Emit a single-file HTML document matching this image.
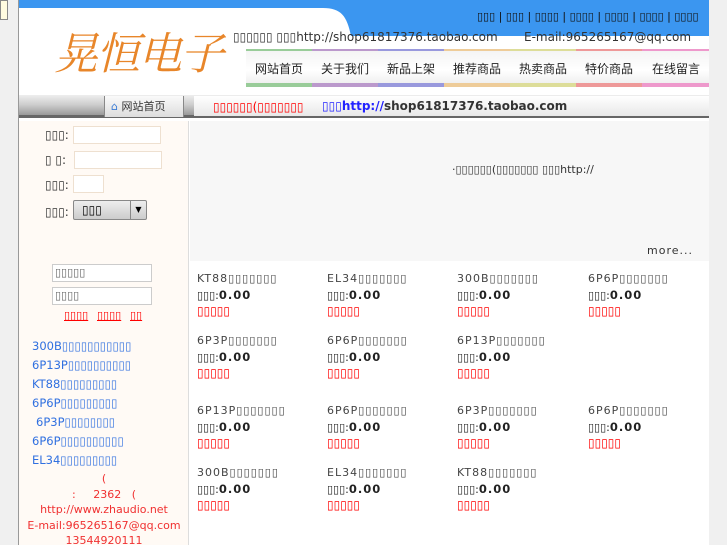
<!DOCTYPE html>
<html><head><meta charset="utf-8"><style>
*{margin:0;padding:0;box-sizing:border-box}
html,body{width:727px;height:545px;overflow:hidden}
body{background:#f0f0f0;font-family:"DejaVu Sans","Liberation Sans","Noto Sans CJK SC",sans-serif;font-size:12px;position:relative}
.a{position:absolute;white-space:nowrap}
#main{position:absolute;left:18px;top:0;width:691px;height:545px;background:#fff;border-left:1px solid #999;overflow:hidden}
.tab{position:absolute;top:49px;height:38px;width:66px;border-top:2px solid;border-bottom:4px solid;font-size:12px;text-align:center;line-height:36px;color:#222;background:linear-gradient(#f4f4f4,#fff 60%,#f0f0f0)}
.g{color:#333;font-size:12px}
.lk{color:#3070e0;font-size:11.5px}
.it{position:absolute;width:120px;white-space:nowrap}.it .n{font-size:11px;color:#444;letter-spacing:1px}.it .pr{font-size:11px;color:#222;margin-top:3px}.it .pr b{font-size:11.5px;letter-spacing:1px}.it .rr{font-size:12px;color:#f00;margin-top:2px}
</style></head><body>
<div class="a" style="left:0;top:0;width:8px;height:20px;background:#fffbe0;border:1px solid #888"></div>
<div id="main">
 <svg class="a" style="left:0;top:0" width="691" height="36"><path d="M0 0 H691 V36 H332 C328 16 322 8 304 8 H0 Z" fill="#3b96f0"/></svg>
 <div class="a" style="left:458px;top:10px;font-size:11px;color:#111">▯▯▯ | ▯▯▯ | ▯▯▯▯ | ▯▯▯▯ | ▯▯▯▯ | ▯▯▯▯ | ▯▯▯▯</div>
 <div class="a" style="left:35px;top:18px;font-size:44px;color:#e8862a;font-family:'Noto Serif CJK SC',serif;font-style:italic;letter-spacing:-2px">晃恒电子</div>
 <div class="a" style="left:214px;top:30px;font-size:12px;color:#333">▯▯▯▯▯▯ ▯▯▯http://shop61817376.taobao.com</div>
 <div class="a" style="left:505px;top:30px;font-size:12px;color:#333">E-mail:965265167@qq.com</div>
 <div class="tab" style="left:227px;border-color:#9c9;">网站首页</div>
 <div class="tab" style="left:293px;border-color:#b9c;">关于我们</div>
 <div class="tab" style="left:359px;border-color:#99d;">新品上架</div>
 <div class="tab" style="left:425px;border-color:#ec9;">推荐商品</div>
 <div class="tab" style="left:491px;border-color:#dd9;">热卖商品</div>
 <div class="tab" style="left:557px;border-color:#e99;">特价商品</div>
 <div class="tab" style="left:623px;width:68px;border-color:#e9c;">在线留言</div>
 <div class="a" style="left:0;top:95px;width:691px;height:23px;background:linear-gradient(#eee,#ccc 50%,#999);border-bottom:3px solid #666"></div>
 <div class="a" style="left:85px;top:96px;width:80px;height:21px;border-left:1px solid #888;border-right:1px solid #888;background:linear-gradient(#fafafa,#ddd);font-size:11px;color:#333;line-height:21px;padding-left:6px"><span style="color:#3a7bd5">⌂</span> 网站首页</div>
 <div class="a" style="left:175px;top:96px;width:516px;height:20px;background:linear-gradient(#fff,#e8e8e8)"></div>
 <div class="a" style="left:194px;top:100px;font-size:12px;color:#f00">▯▯▯▯▯▯(▯▯▯▯▯▯▯</div>
 <div class="a" style="left:303px;top:99px;font-size:12px;font-weight:bold;color:#333"><span style="color:#22f;font-weight:normal">▯▯▯</span><span style="color:#22f">http://</span>shop61817376.taobao.com</div>
 <div class="a" style="left:0;top:121px;width:170px;height:424px;background:#fffaf5;border-right:1px solid #ddd"></div>
 <div class="a" style="left:171px;top:121px;width:520px;height:140px;background:#f7f7f7"></div>
 <div class="a g" style="left:26px;top:128px">▯▯▯:</div><div class="a" style="left:54px;top:126px;width:88px;height:18px;background:#fff;border:1px solid #eee0d0"></div>
 <div class="a g" style="left:26px;top:153px">▯ ▯:</div><div class="a" style="left:55px;top:151px;width:88px;height:18px;background:#fff;border:1px solid #eee0d0"></div>
 <div class="a g" style="left:26px;top:178px">▯▯▯:</div><div class="a" style="left:54px;top:175px;width:31px;height:18px;background:#fff;border:1px solid #eee0d0"></div>
 <div class="a g" style="left:26px;top:205px">▯▯▯:</div><div class="a" style="left:54px;top:200px;width:74px;height:20px;background:linear-gradient(#eee,#ccc);border:1px solid #888;border-radius:2px;font-size:12px;padding:2px 8px">▯▯▯<span style="position:absolute;left:56px;top:0;width:16px;height:18px;border-left:1px solid #888;text-align:center;font-size:8px;line-height:18px">▼</span></div>
 <div class="a" style="left:33px;top:264px;width:100px;height:18px;background:#fff;border:1px solid #ccc;font-size:11px;color:#666;padding:1px 2px">▯▯▯▯▯</div>
 <div class="a" style="left:33px;top:287px;width:100px;height:18px;background:#fff;border:1px solid #ccc;font-size:11px;color:#666;padding:1px 2px">▯▯▯▯</div>
 <div class="a" style="left:45px;top:309px;font-size:11px;color:#f00;text-decoration:underline;font-weight:bold">▯▯▯▯</div>
 <div class="a" style="left:78px;top:309px;font-size:11px;color:#f00;text-decoration:underline;font-weight:bold">▯▯▯▯</div>
 <div class="a" style="left:111px;top:309px;font-size:11px;color:#f00;text-decoration:underline;font-weight:bold">▯▯</div>
 <div class="a lk" style="left:13px;top:339px">300B▯▯▯▯▯▯▯▯▯▯▯</div>
 <div class="a lk" style="left:13px;top:358px">6P13P▯▯▯▯▯▯▯▯▯▯</div>
 <div class="a lk" style="left:13px;top:377px">KT88▯▯▯▯▯▯▯▯▯</div>
 <div class="a lk" style="left:13px;top:396px">6P6P▯▯▯▯▯▯▯▯▯</div>
 <div class="a lk" style="left:17px;top:415px">6P3P▯▯▯▯▯▯▯▯</div>
 <div class="a lk" style="left:13px;top:434px">6P6P▯▯▯▯▯▯▯▯▯▯</div>
 <div class="a lk" style="left:13px;top:453px">EL34▯▯▯▯▯▯▯▯▯</div>
 <div class="a" style="left:0;top:471px;width:170px;text-align:center;color:#f03030;font-size:11px;line-height:15.5px;white-space:normal">(<br>:&nbsp;&nbsp;&nbsp;&nbsp;&nbsp;2362&nbsp;&nbsp;&nbsp;(<br>http://www.zhaudio.net<br>E-mail:965265167@qq.com<br>13544920111</div>
 <div class="a" style="left:433px;top:163px;font-size:11px;color:#333">·▯▯▯▯▯▯(▯▯▯▯▯▯▯ ▯▯▯http://</div>
 <div class="a" style="left:628px;top:244px;font-size:11px;color:#333;letter-spacing:1px">more...</div>
</div>
<div class="it" style="left:197px;top:272px"><div class="n">KT88▯▯▯▯▯▯▯</div><div class="pr">▯▯▯:<b>0.00</b></div><div class="rr">▯▯▯▯▯</div></div>
<div class="it" style="left:327px;top:272px"><div class="n">EL34▯▯▯▯▯▯▯</div><div class="pr">▯▯▯:<b>0.00</b></div><div class="rr">▯▯▯▯▯</div></div>
<div class="it" style="left:457px;top:272px"><div class="n">300B▯▯▯▯▯▯▯</div><div class="pr">▯▯▯:<b>0.00</b></div><div class="rr">▯▯▯▯▯</div></div>
<div class="it" style="left:588px;top:272px"><div class="n">6P6P▯▯▯▯▯▯▯</div><div class="pr">▯▯▯:<b>0.00</b></div><div class="rr">▯▯▯▯▯</div></div>
<div class="it" style="left:197px;top:334px"><div class="n">6P3P▯▯▯▯▯▯▯</div><div class="pr">▯▯▯:<b>0.00</b></div><div class="rr">▯▯▯▯▯</div></div>
<div class="it" style="left:327px;top:334px"><div class="n">6P6P▯▯▯▯▯▯▯</div><div class="pr">▯▯▯:<b>0.00</b></div><div class="rr">▯▯▯▯▯</div></div>
<div class="it" style="left:457px;top:334px"><div class="n">6P13P▯▯▯▯▯▯▯</div><div class="pr">▯▯▯:<b>0.00</b></div><div class="rr">▯▯▯▯▯</div></div>
<div class="it" style="left:197px;top:404px"><div class="n">6P13P▯▯▯▯▯▯▯</div><div class="pr">▯▯▯:<b>0.00</b></div><div class="rr">▯▯▯▯▯</div></div>
<div class="it" style="left:327px;top:404px"><div class="n">6P6P▯▯▯▯▯▯▯</div><div class="pr">▯▯▯:<b>0.00</b></div><div class="rr">▯▯▯▯▯</div></div>
<div class="it" style="left:457px;top:404px"><div class="n">6P3P▯▯▯▯▯▯▯</div><div class="pr">▯▯▯:<b>0.00</b></div><div class="rr">▯▯▯▯▯</div></div>
<div class="it" style="left:588px;top:404px"><div class="n">6P6P▯▯▯▯▯▯▯</div><div class="pr">▯▯▯:<b>0.00</b></div><div class="rr">▯▯▯▯▯</div></div>
<div class="it" style="left:197px;top:466px"><div class="n">300B▯▯▯▯▯▯▯</div><div class="pr">▯▯▯:<b>0.00</b></div><div class="rr">▯▯▯▯▯</div></div>
<div class="it" style="left:327px;top:466px"><div class="n">EL34▯▯▯▯▯▯▯</div><div class="pr">▯▯▯:<b>0.00</b></div><div class="rr">▯▯▯▯▯</div></div>
<div class="it" style="left:457px;top:466px"><div class="n">KT88▯▯▯▯▯▯▯</div><div class="pr">▯▯▯:<b>0.00</b></div><div class="rr">▯▯▯▯▯</div></div>
</body></html>
